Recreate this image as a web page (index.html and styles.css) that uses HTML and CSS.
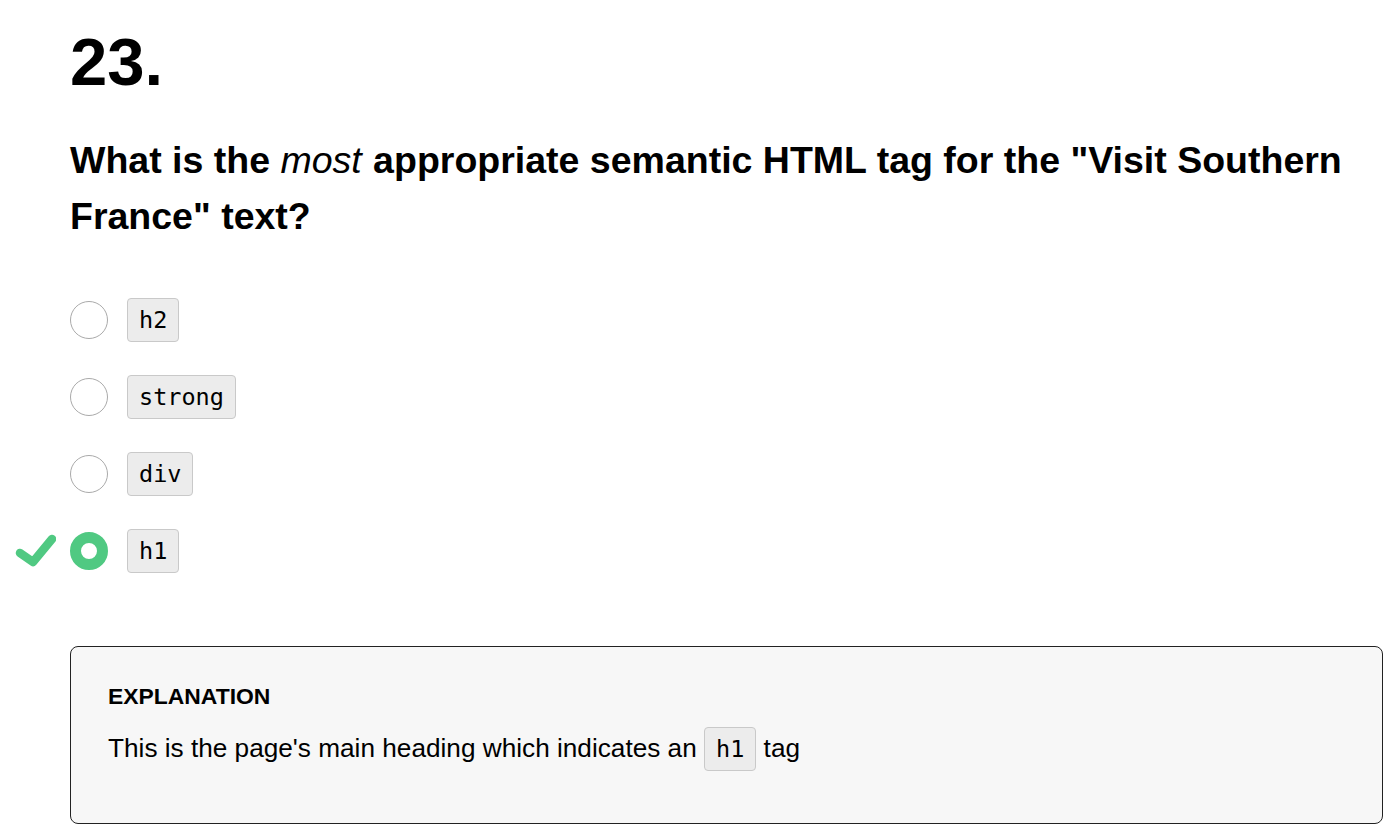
FILE: index.html
```html
<!DOCTYPE html>
<html lang="en">
<head>
<meta charset="utf-8">
<title>Question 23</title>
<link rel="stylesheet" href="styles.css">
</head>
<body>
<main class="quiz">
  <h1 class="number">23.</h1>
  <h2 class="question">What is the <em>most</em> appropriate semantic HTML tag for the "Visit Southern France" text?</h2>
  <ul class="options">
    <li class="option"><span class="radio"></span><code class="tag">h2</code></li>
    <li class="option"><span class="radio"></span><code class="tag">strong</code></li>
    <li class="option"><span class="radio"></span><code class="tag">div</code></li>
    <li class="option correct">
      <svg class="check" width="44" height="40" viewBox="0 0 44 40" aria-hidden="true">
        <path d="M8 23 L21 32 L40 9" fill="none" stroke="#50c982" stroke-width="8.5" stroke-linecap="round" stroke-linejoin="round"/>
      </svg>
      <span class="radio selected"></span><code class="tag">h1</code>
    </li>
  </ul>
  <section class="explanation">
    <h3 class="explanation-title">EXPLANATION</h3>
    <p class="explanation-text">This is the page's main heading which indicates an <code class="tag inline">h1</code> tag</p>
  </section>
</main>
</body>
</html>
```

FILE: styles.css
```css
html, body {
  margin: 0;
  padding: 0;
  background: #ffffff;
}

body {
  font-family: "Liberation Sans", Arial, sans-serif;
  color: #000000;
}

.quiz {
  padding: 0 15px 0 70px;
}

.number {
  margin: 22px 0 0 0;
  font-size: 67px;
  line-height: 80px;
  font-weight: 700;
}

.question {
  margin: 30px 0 0 0;
  font-size: 37.5px;
  line-height: 56px;
  font-weight: 700;
}

.question em {
  font-weight: 400;
  font-style: italic;
  padding-right: 1px;
}

.options {
  list-style: none;
  margin: 54px 0 0 0;
  padding: 0;
  display: flex;
  flex-direction: column;
  gap: 33px;
}

.option {
  position: relative;
  display: flex;
  align-items: center;
  gap: 19px;
  height: 44px;
}

.radio {
  box-sizing: border-box;
  width: 38px;
  height: 38px;
  border-radius: 50%;
  border: 1px solid #aaaaaa;
  background: #ffffff;
  flex: none;
}

.radio.selected {
  border: 11px solid #50c982;
}

.check {
  position: absolute;
  left: -58px;
  top: 1px;
}

.tag {
  display: inline-block;
  box-sizing: border-box;
  font-family: "DejaVu Sans Mono", "Liberation Mono", monospace;
  font-size: 23.5px;
  line-height: 28px;
  padding: 7px 11px;
  border: 1px solid #c9c9c9;
  border-radius: 4px;
  background: #ececec;
  color: #000000;
}

.explanation {
  margin-top: 73px;
  border: 1px solid #222222;
  border-radius: 8px;
  background: #f7f7f7;
  padding: 36px 37px 0 37px;
  height: 178px;
  box-sizing: border-box;
}

.explanation-title {
  margin: 0;
  font-size: 22.9px;
  line-height: 27px;
  font-weight: 700;
}

.explanation-text {
  margin: 16px 0 0 0;
  font-size: 26.2px;
  line-height: 44px;
}

.tag.inline {
  line-height: 28px;
  vertical-align: baseline;
}
```
